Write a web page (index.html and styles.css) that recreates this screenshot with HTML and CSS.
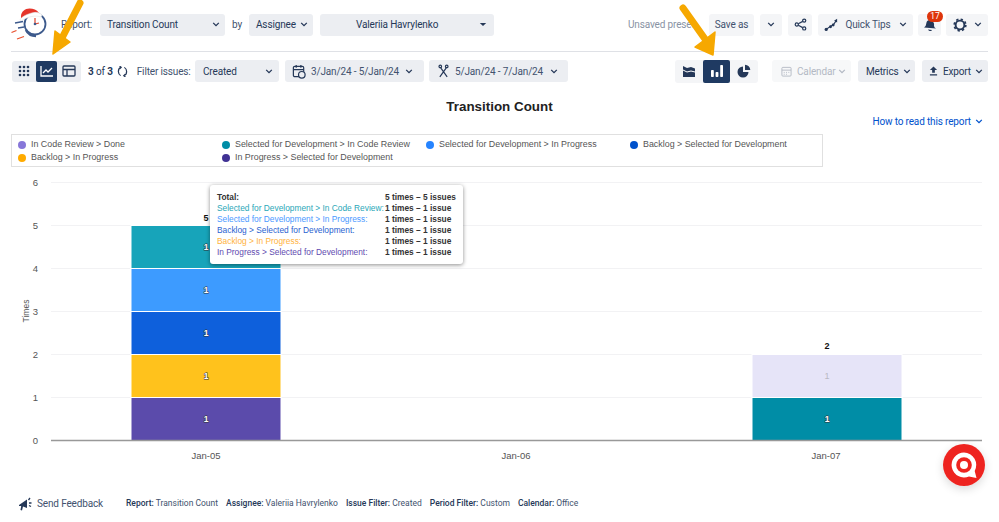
FILE: index.html
```html
<!DOCTYPE html>
<html lang="en">
<head>
<meta charset="utf-8">
<title>Transition Count</title>
<link rel="stylesheet" href="styles.css">
</head>
<body>
<div class="page">
  <header class="top">
    <svg class="logo" viewBox="0 0 40 40" width="40" height="40" aria-hidden="true">
      <circle cx="25" cy="19" r="10.500" fill="#fff" stroke="#3d5a8c" stroke-width="1.800"/>
      <path d="M16 25c2 4 6 6 10 6" fill="none" stroke="#3d5a8c" stroke-width="2.600"/>
      <path d="M25 19v-6M25 19l4-1" stroke="#e0452e" stroke-width="1.200" fill="none"/>
      <circle cx="25" cy="19" r="1.300" fill="#3d5a8c"/>
      <path d="M11 11c0-4 4-7.500 8.500-7.500 4 0 7 1 9.500 4.500l-18 5z" fill="#e5352b"/>
      <path d="M10 15c1-3 8-6.500 14-7.500 3-.5 6 .5 8 2.500l-1 2c-5-2-14-.5-20 4z" fill="#fff" stroke="#e4e4e4" stroke-width=".6"/>
      <path d="M5 18l8-1.500M8 23l6-1" stroke="#3d5a8c" stroke-width="1.300"/>
      <path d="M1.500 27.500l5-2M7 34l7-2.500" stroke="#e8502e" stroke-width="1.300"/>
    </svg>
    <span class="lbl lbl-report">Report:</span>
    <button class="sel w-report"><span>Transition Count</span><svg class="chev" viewBox="0 0 10 6"><path d="M1.500 1l3.500 3.500L8.500 1"/></svg></button>
    <span class="lbl lbl-by">by</span>
    <button class="sel w-assignee"><span>Assignee</span><svg class="chev" viewBox="0 0 10 6"><path d="M1.500 1l3.500 3.500L8.500 1"/></svg></button>
    <button class="sel w-person"><span class="person">Valeriia Havrylenko</span><svg class="caret" viewBox="0 0 10 6"><path d="M1 1h8L5 5z"/></svg></button>
    <span class="unsaved">Unsaved preset</span>
    <button class="tool w-save">Save as</button>
    <button class="tool w-more"><svg class="chev" viewBox="0 0 10 6"><path d="M1.500 1l3.500 3.500L8.500 1"/></svg></button>
    <button class="tool w-share"><svg viewBox="0 0 14 14" width="13" height="13"><circle cx="11" cy="2.800" r="1.700" class="ring"/><circle cx="11" cy="11.200" r="1.700" class="ring"/><circle cx="3" cy="7" r="1.700" class="ring"/><path d="M4.600 6.100l4.800-2.500M4.600 7.900l4.800 2.500" class="ring"/></svg></button>
    <button class="tool w-tips"><svg viewBox="0 0 16 16" width="14" height="14"><path d="M2.500 13l5-3.500 3-1.500L14 3" class="ring"/><circle cx="2.500" cy="13" r="1.800" class="dot"/><circle cx="7.500" cy="10" r="1.600" class="dot"/><circle cx="10.500" cy="8" r="1.600" class="dot"/><path d="M11.500 3L15 .8 15 5z" class="dot"/></svg><span class="tips-text">Quick Tips</span><svg class="chev" viewBox="0 0 10 6"><path d="M1.500 1l3.500 3.500L8.500 1"/></svg></button>
    <button class="tool w-bell"><svg viewBox="0 0 14 14" width="14" height="14"><path d="M1 9.500c2-1 2-3 2.500-5C4 2.500 6 1 8.500 2.500c2 1 3 3 2.500 5 0 1.500 1 2.500 2 3l-12-1zM5 11.500l4 .5c-.5 1.500-3 1.500-4-.5z" class="dot"/></svg><span class="badge">17</span></button>
    <button class="tool w-gear"><svg viewBox="0 0 16 16" width="14" height="14"><circle cx="8" cy="8" r="5" fill="none" stroke="#253858" stroke-width="2.200"/><circle cx="8" cy="8" r="6.600" fill="none" stroke="#253858" stroke-width="2" stroke-dasharray="2.600 2.580"/></svg><svg class="chev" viewBox="0 0 10 6"><path d="M1.500 1l3.500 3.500L8.500 1"/></svg></button>
  </header>

  <nav class="bar">
    <div class="seg seg-left">
      <span class="seg-btn"><svg viewBox="0 0 12 12" width="12" height="12"><g class="dot"><circle cx="2" cy="2" r="1.300"/><circle cx="6" cy="2" r="1.300"/><circle cx="10" cy="2" r="1.300"/><circle cx="2" cy="6" r="1.300"/><circle cx="6" cy="6" r="1.300"/><circle cx="10" cy="6" r="1.300"/><circle cx="2" cy="10" r="1.300"/><circle cx="6" cy="10" r="1.300"/><circle cx="10" cy="10" r="1.300"/></g></svg></span>
      <span class="seg-btn is-on"><svg viewBox="0 0 14 12" width="14" height="12"><path d="M1 1v10h12" class="ring-w"/><path d="M3 8l3-3 2 2 4-4" class="ring-w"/></svg></span>
      <span class="seg-btn"><svg viewBox="0 0 14 12" width="14" height="12"><rect x="1" y="1" width="12" height="10" rx="1" class="ring"/><path d="M1 4.500h12M5 4.500V11" class="ring"/></svg></span>
    </div>
    <span class="count"><b>3</b> of <b>3</b></span>
    <svg class="refresh" viewBox="0 0 12 12" width="11" height="11"><path d="M4.500 1.500C2.500 2 1.500 4 1.500 6c0 2 1 3.500 2.500 4.500M7.500 10.500c2-.5 3-2.500 3-4.500 0-2-1-3.500-2.500-4.500M2.800 0l1.800 1.500L3 3M9.200 12l-1.800-1.500L9 9" class="ring"/></svg>
    <span class="lbl lbl-filter">Filter issues:</span>
    <button class="sel w-created"><span>Created</span><svg class="chev" viewBox="0 0 10 6"><path d="M1.500 1l3.500 3.500L8.500 1"/></svg></button>
    <button class="sel w-date1"><svg viewBox="0 0 14 16" width="14" height="15"><rect x="1" y="2.500" width="11" height="11" rx="1.500" class="ring"/><path d="M1 6h11M4 1v3M9 1v3" class="ring"/><circle cx="10" cy="11.500" r="3.500" fill="#eceef2" stroke="#253858" stroke-width="1.300"/></svg><span class="dt">3/Jan/24 - 5/Jan/24</span><svg class="chev" viewBox="0 0 10 6"><path d="M1.500 1l3.500 3.500L8.500 1"/></svg></button>
    <button class="sel w-date2"><svg viewBox="0 0 12 14" width="11" height="14"><circle cx="2.500" cy="2" r="1.400" class="ring"/><circle cx="9.500" cy="2" r="1.400" class="ring"/><path d="M3 3.500l7 10M9 3.500l-7 10" class="ring"/></svg><span class="dt">5/Jan/24 - 7/Jan/24</span><svg class="chev" viewBox="0 0 10 6"><path d="M1.500 1l3.500 3.500L8.500 1"/></svg></button>
    <div class="seg seg-right">
      <span class="seg-btn2"><svg viewBox="0 0 14 13" width="14" height="13"><path d="M1 1l4 2 4-1 4 1.500V12H1z" class="dot"/><path d="M1 5l4 2 4-1 4 1" fill="none" stroke="#fff" stroke-width="1"/></svg></span>
      <span class="seg-btn2 is-on"><svg viewBox="0 0 14 14" width="14" height="14"><rect x="1" y="6" width="2.800" height="7" rx=".8" fill="#fff"/><rect x="5.600" y="8" width="2.800" height="5" rx=".8" fill="#fff"/><rect x="10.200" y="1" width="2.800" height="12" rx=".8" fill="#fff"/></svg></span>
      <span class="seg-btn2"><svg viewBox="0 0 14 14" width="14" height="14"><path d="M6 2.500a5.500 5.500 0 1 0 5.500 5.500H6z" class="dot"/><path d="M8 .7a5.500 5.500 0 0 1 5.300 5.300H8z" class="dot"/></svg></span>
    </div>
    <button class="sel w-cal is-off"><svg class="cal-ic" viewBox="0 0 12 12" width="11" height="11"><rect x="1" y="1.500" width="10" height="9.500" rx="1" fill="none" stroke="#b3b9c4"/><path d="M1 4.500h10M3 7h1M5.500 7h1M8 7h1M3 9h1M5.500 9h1" stroke="#b3b9c4"/></svg><span>Calendar</span><svg class="chev" viewBox="0 0 10 6"><path d="M1.500 1l3.500 3.500L8.500 1"/></svg></button>
    <button class="sel w-metrics"><span>Metrics</span><svg class="chev" viewBox="0 0 10 6"><path d="M1.500 1l3.500 3.500L8.500 1"/></svg></button>
    <button class="sel w-export"><svg viewBox="0 0 10 10" width="9" height="10"><path d="M5 0l4 4H6.500v3h-3V4H1zM1 8.500h8V10H1z" class="dot"/></svg><span class="exp-text">Export</span><svg class="chev" viewBox="0 0 10 6"><path d="M1.500 1l3.500 3.500L8.500 1"/></svg></button>
  </nav>

  <h1 class="title">Transition Count</h1>
  <div class="howto"><a>How to read this report</a><svg class="chev chev-blue" viewBox="0 0 10 6"><path d="M1.500 1l3.500 3.500L8.500 1"/></svg></div>

  <ul class="legend">
    <li><i class="d-purple"></i>In Code Review &gt; Done</li>
    <li><i class="d-teal"></i>Selected for Development &gt; In Code Review</li>
    <li><i class="d-blue"></i>Selected for Development &gt; In Progress</li>
    <li><i class="d-navy"></i>Backlog &gt; Selected for Development</li>
    <li><i class="d-yellow"></i>Backlog &gt; In Progress</li>
    <li><i class="d-indigo"></i>In Progress &gt; Selected for Development</li>
  </ul>

  <svg class="chart" viewBox="0 0 999 290" width="999" height="290">
    <g class="grid">
      <path d="M51 7.500h931M51 50.500h931M51 93.500h931M51 136.500h931M51 179.500h931M51 222.500h931"/>
    </g>
    <g class="ytick">
      <text x="38" y="10.500">6</text><text x="38" y="53.500">5</text><text x="38" y="96.500">4</text><text x="38" y="139.500">3</text><text x="38" y="182.500">2</text><text x="38" y="225.500">1</text><text x="38" y="268.500">0</text>
    </g>
    <text class="ytitle" transform="translate(29 136) rotate(-90)">Times</text>
    <g class="bars">
      <rect x="131" y="50.500" width="150" height="43" fill="#17a4ba"/>
      <rect x="131" y="93.500" width="150" height="43" fill="#3d9bff"/>
      <rect x="131" y="136.500" width="150" height="43" fill="#0e60dc"/>
      <rect x="131" y="179.500" width="150" height="43" fill="#ffc21c"/>
      <rect x="131" y="222.500" width="150" height="43" fill="#5b4bab"/>
      <rect x="752" y="179.500" width="150" height="43" fill="#e6e4f8"/>
      <rect x="752" y="222.500" width="150" height="43" fill="#008da6"/>
    </g>
    <path class="axis" d="M51 265.500h931"/>
    <g class="barval">
      <text x="206" y="75">1</text><text x="206" y="118">1</text><text x="206" y="161">1</text><text x="206" y="204">1</text><text x="206" y="247">1</text><text x="827" y="247">1</text>
    </g>
    <text class="barval-faint" x="827" y="204">1</text>
    <g class="total"><text x="206" y="46">5</text><text x="827" y="174">2</text></g>
    <g class="xtick"><text x="206" y="283.500">Jan-05</text><text x="516" y="283.500">Jan-06</text><text x="826" y="283.500">Jan-07</text></g>
  </svg>

  <footer class="foot">
    <span class="send"><svg viewBox="0 0 15 15" width="15" height="15"><path d="M1 9l8-5.500V12L5 10.500l-1 4-1.500-.5.700-4L1 10z" class="dot"/><path d="M10.500 4l1.500-2M11 7h2.500M11 9.500l2 1" class="ring"/></svg>Send Feedback</span>
    <span class="meta"><b>Report:</b> Transition Count</span>
    <span class="meta"><b>Assignee:</b> Valeriia Havrylenko</span>
    <span class="meta"><b>Issue Filter:</b> Created</span>
    <span class="meta"><b>Period Filter:</b> Custom</span>
    <span class="meta"><b>Calendar:</b> Office</span>
  </footer>
</div>

<div class="tip">
  <span class="t-head">Total:</span><b>5 times – 5 issues</b>
  <span class="t-teal">Selected for Development &gt; In Code Review:</span><b>1 times – 1 issue</b>
  <span class="t-blue">Selected for Development &gt; In Progress:</span><b>1 times – 1 issue</b>
  <span class="t-navy">Backlog &gt; Selected for Development:</span><b>1 times – 1 issue</b>
  <span class="t-yellow">Backlog &gt; In Progress:</span><b>1 times – 1 issue</b>
  <span class="t-indigo">In Progress &gt; Selected for Development:</span><b>1 times – 1 issue</b>
</div>

<svg class="arrows" viewBox="0 0 999 522" width="999" height="522" aria-hidden="true">
  <path d="M80 3L62 38" stroke="#f6a800" stroke-width="7" fill="none" stroke-linecap="round"/>
  <path d="M53 54L55 31 70 42z" fill="#f6a800" stroke="#f6a800" stroke-width="1.500" stroke-linejoin="round"/>
  <path d="M683 8l22 31" stroke="#f6a800" stroke-width="7" fill="none" stroke-linecap="round"/>
  <path d="M713 55L695 47 715 32z" fill="#f6a800" stroke="#f6a800" stroke-width="1.500" stroke-linejoin="round"/>
</svg>

<div class="fab">
  <svg viewBox="0 0 42 42" width="42" height="42"><circle cx="21" cy="21" r="21" fill="#ee2420"/><path d="M21 8.500a12.500 12.500 0 1 0 5 24l7.500 1.500-1.800-7A12.500 12.500 0 0 0 21 8.500z" fill="#fff"/><circle cx="21" cy="21" r="7.800" fill="#ee2420"/><circle cx="21" cy="21" r="4" fill="#fff"/></svg>
</div>
</body>
</html>
```

FILE: styles.css
```css
* { box-sizing: border-box; }
html, body { margin: 0; padding: 0; background: #fff; overflow: hidden; }
body { width: 999px; height: 522px; position: relative; font-family: Roboto, "Liberation Sans", sans-serif; font-size: 10px; letter-spacing: -.15px; color: #253858; white-space: nowrap; }
.page { display: flex; flex-direction: column; height: 522px; }
button { font: inherit; letter-spacing: inherit; color: inherit; border: 0; margin: 0; }

.top { display: flex; align-items: center; height: 38px; margin: 5.500px 11px 7.500px 10px; }
.top::after { content: ""; position: absolute; left: 11px; top: 51px; width: 977px; height: 1px; background: #dfe1e6; }
.logo { flex: none; }
.lbl { color: #42526e; }
.lbl-report { margin-left: 11px; width: 39px; }
.lbl-by { margin: 0 7px; width: 10px; }
.sel, .tool { display: flex; align-items: center; flex: none; height: 22px; padding: 0 5px 0 7px; border-radius: 3px; background: #eceef2; }
.sel > .chev, .sel > .caret { margin-left: auto; }
.tool { background: #f4f5f7; justify-content: center; position: relative; padding: 0; }
.chev { width: 8px; height: 5px; flex: none; fill: none; stroke: #253858; stroke-width: 1.600; }
.chev-blue { stroke: #0052cc; margin-left: 4px; }
.caret { width: 8px; height: 5px; fill: #253858; flex: none; }
.ring { fill: none; stroke: #253858; stroke-width: 1.300; }
.ring-w { fill: none; stroke: #fff; stroke-width: 1.300; }
.dot { fill: #253858; }
.w-report { width: 125px; }
.w-assignee { width: 64px; }
.w-person { width: 174px; margin-left: 7px; padding-right: 7px; }
.person { margin-left: 29px; }
.unsaved { margin-left: 134px; width: 81px; overflow: hidden; color: #8993a4; }
.w-save { width: 45px; color: #42526e; }
.w-more { width: 22px; margin-left: 6px; }
.w-share { width: 24px; margin-left: 6px; }
.w-tips { width: 95px; margin-left: 6px; color: #42526e; }
.tips-text { margin: 0 8px 0 7px; }
.w-bell { width: 23px; margin-left: 5px; }
.w-gear { width: 42px; margin-left: 5px; gap: 7px; }
.badge { position: absolute; left: 9px; top: -3px; height: 11px; min-width: 16px; border-radius: 6px; background: #de350b; color: #fff; font-size: 8.500px; line-height: 11px; text-align: center; }

.bar { display: flex; align-items: center; height: 22px; margin: 9px 11px 0 12px; }
.seg { display: flex; align-items: center; border-radius: 3px; flex: none; }
.seg-left { width: 69px; height: 21px; background: #eceef2; }
.seg-btn { display: flex; align-items: center; justify-content: center; width: 24px; height: 21px; }
.seg-btn.is-on { width: 21px; background: #1f3a62; border-radius: 2px; }
.count { margin-left: 7px; width: 25px; color: #253858; }
.refresh { margin-left: 4px; flex: none; }
.lbl-filter { margin-left: 9px; width: 59px; }
.w-created { width: 84px; padding: 0 6px 0 8px; }
.w-date1 { width: 139px; margin-left: 6px; padding-right: 11px; color: #42526e; }
.w-date2 { width: 139px; margin-left: 5px; padding: 0 10px 0 9px; color: #42526e; }
.dt { margin-left: 5px; }
.w-date2 .dt { margin-left: 6px; }
.seg-right { width: 83px; height: 23px; margin-left: 107px; background: #f4f5f7; }
.seg-btn2 { display: flex; align-items: center; justify-content: center; width: 28px; height: 23px; }
.seg-btn2.is-on { width: 27px; background: #1f3a62; border-radius: 2px; }
.w-cal { width: 79px; margin-left: 14px; background: #f7f8f9; color: #b3b9c4; padding-left: 9px; }
.cal-ic { margin-right: 5px; }
.w-cal .chev { stroke: #b3b9c4; }
.w-metrics { width: 57px; margin-left: 7px; padding: 0 4px 0 8px; }
.w-export { width: 66px; margin-left: 7px; }
.exp-text { margin-left: 5px; }

.title { margin: 17px 0 0; height: 16px; font: bold 13.400px/16px "Liberation Sans", sans-serif; letter-spacing: 0; color: #222; text-align: center; }
.howto { display: flex; align-items: center; justify-content: flex-end; height: 13px; margin-right: 16px; color: #0052cc; font-size: 10px; }
.legend { display: grid; grid-template-columns: repeat(4, 204px); grid-auto-rows: 13px; align-content: center; list-style: none; width: 812px; height: 33px; margin: 6px 0 0 11px; padding: 1px 0 0 6px; border: 1px solid #e0e0e0; font: 8.900px/13px "Liberation Sans", sans-serif; letter-spacing: 0; color: #555; }
.legend li { display: flex; align-items: center; gap: 5px; }
.legend li:nth-child(5) { grid-column: 1; }
.legend i { width: 8px; height: 8px; border-radius: 50%; }
.d-purple { background: #8777d9; }
.d-teal { background: #008da6; }
.d-blue { background: #2684ff; }
.d-navy { background: #0052cc; }
.d-yellow { background: #ffab00; }
.d-indigo { background: #403294; }

.chart { display: block; margin-top: 8px; flex: none; font-family: "Liberation Sans", sans-serif; letter-spacing: 0; }
.grid path { stroke: #f2f2f4; stroke-width: 1; fill: none; }
.axis { stroke: #999; stroke-width: 1.500; fill: none; }
.bars rect { stroke: #fff; stroke-width: 1; }
.ytick text { font-size: 9.500px; fill: #555; text-anchor: end; }
.ytitle { font-size: 8.500px; fill: #555; text-anchor: middle; }
.barval text { font-size: 8.500px; font-weight: bold; fill: #fff; text-anchor: middle; stroke: #333; stroke-width: 1px; paint-order: stroke; }
.barval-faint { font-size: 9px; fill: #b9b9c4; text-anchor: middle; }
.total text { font-size: 9px; font-weight: bold; fill: #111; text-anchor: middle; }
.xtick text { font-size: 9.500px; fill: #555; text-anchor: middle; }

.foot { display: flex; align-items: center; flex: none; height: 16px; margin: 30px 0 0 18px; font-size: 8.500px; letter-spacing: 0; color: #42526e; }
.foot b { color: #253858; font-weight: 500; }
.send { display: flex; align-items: center; gap: 4px; width: 108px; font-size: 10px; letter-spacing: -.15px; color: #42526e; }
.meta { margin-right: 8px; }

.tip { position: absolute; left: 210px; top: 185px; width: 253px; height: 79px; display: grid; grid-template-columns: 168px auto; grid-auto-rows: 11.100px; align-content: center; padding: 1px 0 0 7px; background: #fff; border-radius: 3px; box-shadow: 0 1px 4px rgba(0,0,0,.45); font: 8.350px/11px "Liberation Sans", sans-serif; letter-spacing: 0; color: #333; }
.tip b { color: #333; }
.t-head { font-weight: bold; }
.t-teal { color: #2aa7b8; }
.t-blue { color: #4c9aff; }
.t-navy { color: #2a5fd0; }
.t-yellow { color: #ffb340; }
.t-indigo { color: #5f4bb0; }

.arrows { position: absolute; left: 0; top: 0; pointer-events: none; }
.fab { position: absolute; left: 943px; top: 444px; width: 42px; height: 42px; border-radius: 50%; box-shadow: 0 3px 10px rgba(0,0,0,.15); }
```
